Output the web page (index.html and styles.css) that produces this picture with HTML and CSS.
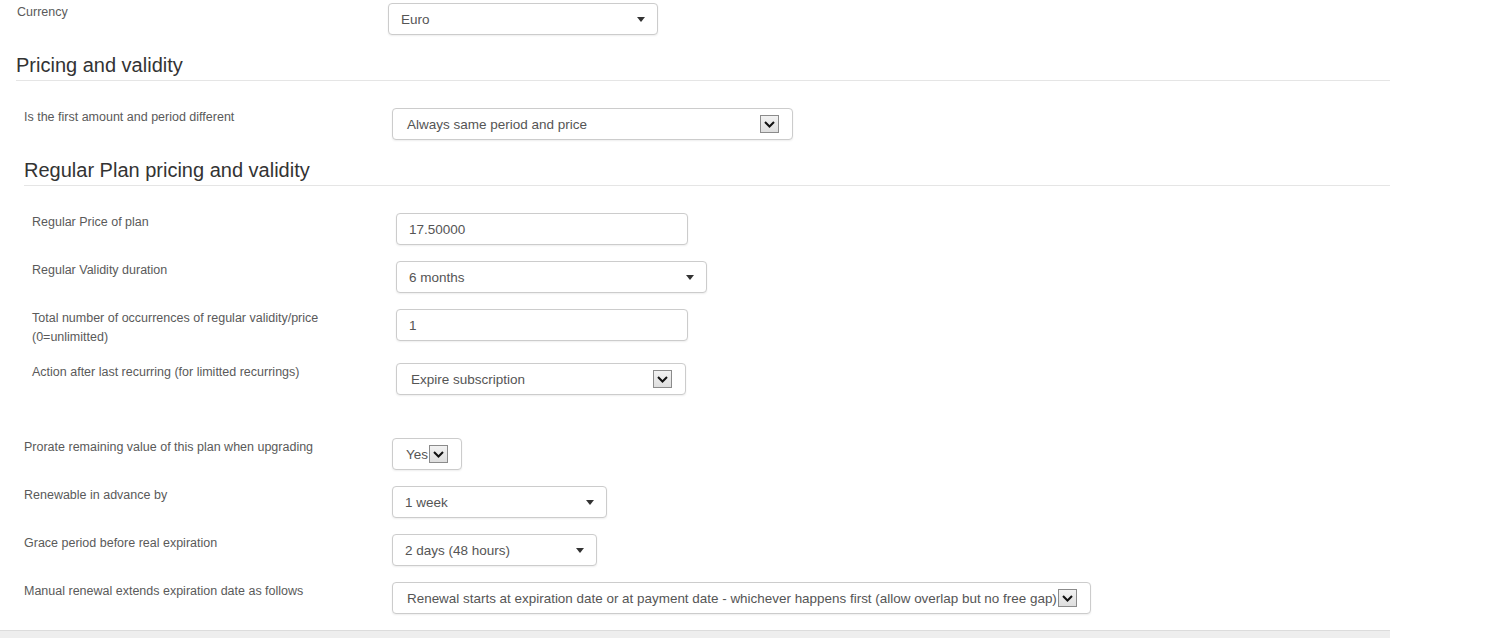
FILE: index.html
```html
<!DOCTYPE html>
<html lang="en">
<head>
    <meta charset="UTF-8">
    <meta name="viewport" content="width=device-width, initial-scale=1.0">
    <title>Plan settings</title>
    <link rel="stylesheet" href="styles.css">
</head>
<body>

    <div class="page">

        <div class="form-row row-top">
            <label class="form-label">Currency</label>
            <div class="select w-currency"><span class="select-text">Euro</span><span class="caret"></span></div>
        </div>

        <section class="block">
            <h3 class="block-title">Pricing and validity</h3>
            <div class="block-body">

                <div class="form-row">
                    <label class="form-label">Is the first amount and period different</label>
                    <div class="select select-old w-first">
                        <span class="select-text">Always same period and price</span>
                        <span class="arrow-box"><svg width="11" height="7" viewBox="0 0 11 7"><path d="M1 1l4.5 4.5L10 1" fill="none" stroke="#111" stroke-width="2"/></svg></span>
                    </div>
                </div>

                <section class="sub">
                    <h3 class="sub-title">Regular Plan pricing and validity</h3>
                    <div class="sub-body">
                        <div class="form-row">
                            <label class="form-label">Regular Price of plan</label>
                            <div class="input w-price">17.50000</div>
                        </div>
                        <div class="form-row">
                            <label class="form-label">Regular Validity duration</label>
                            <div class="select w-validity"><span class="select-text">6 months</span><span class="caret"></span></div>
                        </div>
                        <div class="form-row">
                            <label class="form-label">Total number of occurrences of regular validity/price (0=unlimitted)</label>
                            <div class="input w-price">1</div>
                        </div>
                        <div class="form-row">
                            <label class="form-label">Action after last recurring (for limitted recurrings)</label>
                            <div class="select select-old w-action">
                                <span class="select-text">Expire subscription</span>
                                <span class="arrow-box"><svg width="11" height="7" viewBox="0 0 11 7"><path d="M1 1l4.5 4.5L10 1" fill="none" stroke="#111" stroke-width="2"/></svg></span>
                            </div>
                        </div>
                    </div>
                </section>

                <div class="form-row">
                    <label class="form-label">Prorate remaining value of this plan when upgrading</label>
                    <div class="select select-old select-fit w-prorate">
                        <span class="select-text">Yes</span>
                        <span class="arrow-box"><svg width="11" height="7" viewBox="0 0 11 7"><path d="M1 1l4.5 4.5L10 1" fill="none" stroke="#111" stroke-width="2"/></svg></span>
                    </div>
                </div>
                <div class="form-row">
                    <label class="form-label">Renewable in advance by</label>
                    <div class="select w-renew"><span class="select-text">1 week</span><span class="caret"></span></div>
                </div>
                <div class="form-row">
                    <label class="form-label">Grace period before real expiration</label>
                    <div class="select w-grace"><span class="select-text">2 days (48 hours)</span><span class="caret"></span></div>
                </div>
                <div class="form-row">
                    <label class="form-label">Manual renewal extends expiration date as follows</label>
                    <div class="select select-old select-fit w-manual">
                        <span class="select-text">Renewal starts at expiration date or at payment date - whichever happens first (allow overlap but no free gap)</span>
                        <span class="arrow-box"><svg width="11" height="7" viewBox="0 0 11 7"><path d="M1 1l4.5 4.5L10 1" fill="none" stroke="#111" stroke-width="2"/></svg></span>
                    </div>
                </div>

            </div>
        </section>

        <footer class="page-footer"></footer>
    </div>

</body>
</html>
```

FILE: styles.css
```css
/* Estilos gerais */
body {
    margin: 0;
    background: #fff;
    font-family: 'Liberation Sans', Arial, sans-serif;
    color: #555;
}

.page {
    width: 1390px;
    padding-top: 3px;
}

/* --- linhas do formulario --- */
.form-row {
    display: flex; align-items: flex-start;
    margin-bottom: 16px;
}
.form-label {
    flex-shrink: 0; box-sizing: border-box;
    width: 368px; padding-right: 30px;
    font-size: 12.5px; line-height: 19px; color: #5a5a5a;
}
.row-top { padding-left: 17px; margin-bottom: 19px; }
.row-top .form-label { width: 371px; }

/* --- secoes --- */
.block { padding-left: 16px; }
.block-title, .sub-title {
    margin: 0; padding-bottom: 4px;
    font-size: 20px; font-weight: normal; line-height: 22px; color: #333;
    border-bottom: 1px solid #e5e5e5;
}
.block-body { padding: 27px 0 0 8px; }
.block-body > .form-row:first-child { margin-bottom: 19px; }
.sub { margin-bottom: 43px; }
.sub-body { padding: 27px 0 0 8px; }
.sub-body .form-label { width: 364px; }
.sub-body .form-row:last-child { margin-bottom: 0; }

/* --- campos --- */
.select, .input {
    display: flex; align-items: center; box-sizing: border-box;
    height: 32px; padding: 0 12px;
    background: #fff; border: 1px solid #ccc; border-radius: 4px;
    box-shadow: 0 1px 2px rgba(0, 0, 0, 0.07);
    font-size: 13.5px; color: #555;
}
.select-text { white-space: nowrap; }
.caret {
    margin-left: auto; width: 0; height: 0;
    border-top: 5px solid #333;
    border-left: 4px solid transparent; border-right: 4px solid transparent;
}
.select-old { padding: 0 13px 0 14px; }
.arrow-box {
    flex-shrink: 0; margin-left: auto;
    width: 19px; height: 18px; box-sizing: border-box;
    display: flex; align-items: center; justify-content: center;
    background: linear-gradient(#f2f2f2, #dedede);
    border: 1px solid #8b8b8b;
}
/* largura pelo conteudo, seta colada no texto */
.select-fit { width: auto; }
.select-fit .arrow-box { margin-left: 1px; }
.w-prorate { padding-left: 13px; }
.w-manual { font-size: 13.45px; }

.w-currency { width: 270px; }
.w-first { width: 401px; }
.w-price { width: 292px; }
.w-validity { width: 311px; }
.w-action { width: 290px; }
.w-renew { width: 215px; }
.w-grace { width: 205px; }

.page-footer {
    margin-top: 5px; height: 12px;
    background: #eee; border-top: 1px solid #dcdcdc;
}
```
